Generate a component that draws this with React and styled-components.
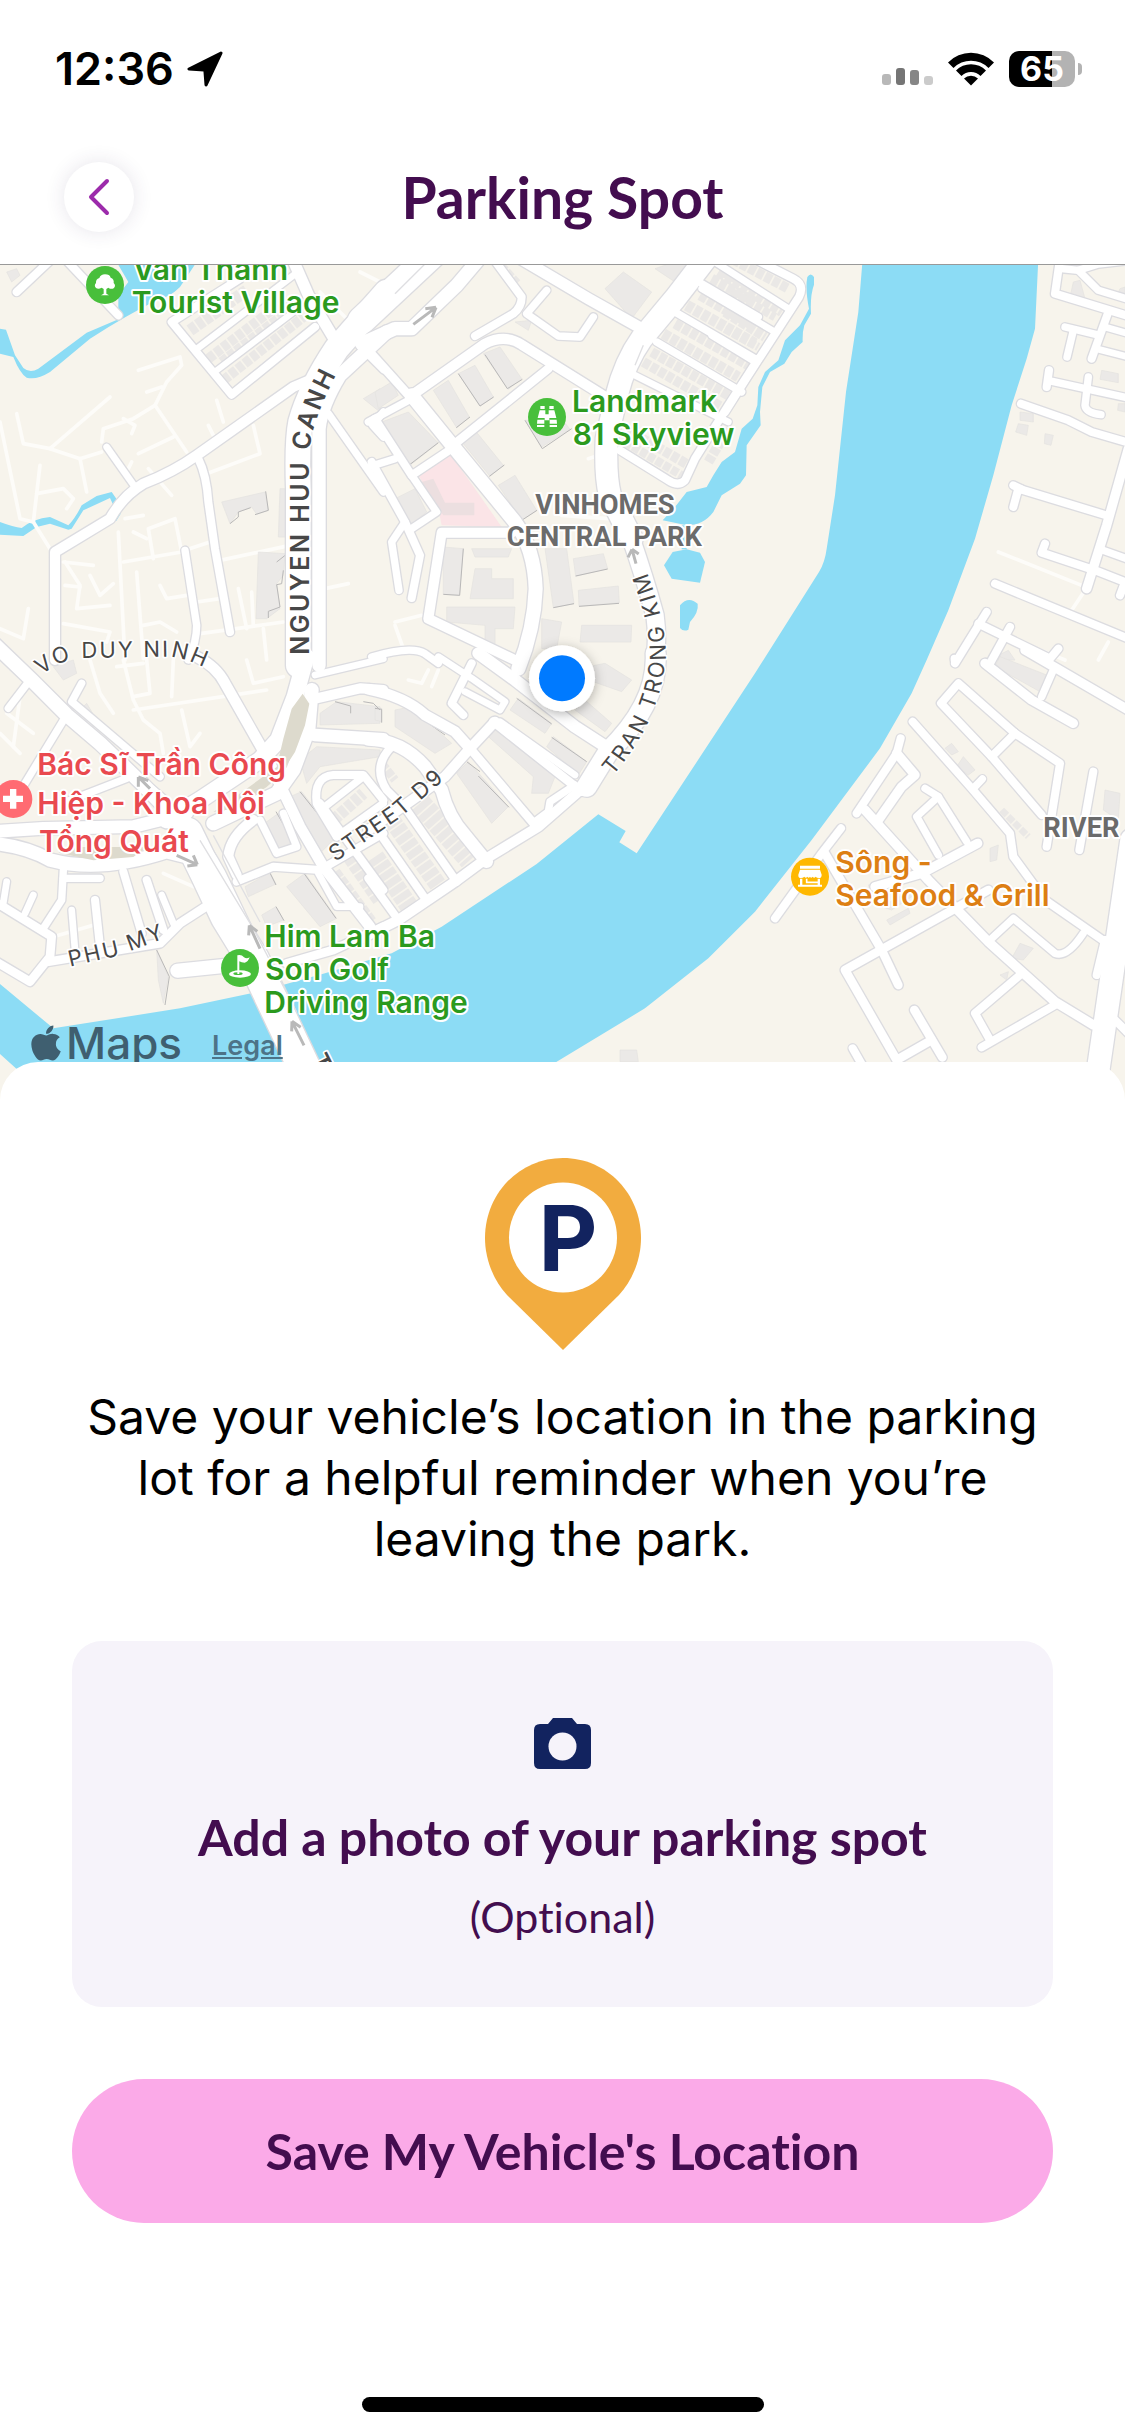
import React, { useState } from 'react';
import styled, { createGlobalStyle } from 'styled-components';
import { FaApple } from 'react-icons/fa';

const GlobalStyle = createGlobalStyle`
  * {
    box-sizing: border-box;
  }

  body {
    margin: 0;
    background: #fff;
    font-family: Inter, 'Liberation Sans', sans-serif;
  }
`;

const Screen = styled.div`
  display: flex;
  flex-direction: column;
  min-height: 100vh;
  background: #fff;
`;

// ---------- status bar ----------

const StatusBar = styled.div`
  display: flex;
  align-items: center;
  justify-content: space-between;
  height: 138px;
  padding: 0 43px 0 55px;
`;

const StatusGroup = styled.div`
  display: flex;
  align-items: center;
  gap: ${({ $gap }) => $gap}px;
`;

const Clock = styled.span`
  font-size: 45px;
  font-weight: 600;
  line-height: 54px;
`;

const SignalBars = styled.div`
  display: flex;
  align-items: flex-end;
  gap: 5px;
  height: 32px;
`;

const Bar = styled.span`
  width: 9px;
  height: ${({ $height }) => $height}px;
  border-radius: 3px;
  background: ${({ $color }) => $color};
`;

const Battery = styled.div`
  display: flex;
  align-items: center;
  gap: 3px;
`;

const BatteryBody = styled.div`
  display: flex;
  align-items: center;
  justify-content: center;
  width: 66px;
  height: 36px;
  border-radius: 10px;
  background: linear-gradient(to right, #000 65%, #b3b3b3 65%);
  color: #fff;
  font-size: 34px;
  font-weight: 700;
  line-height: 36px;
`;

const BatteryCap = styled.span`
  width: 4px;
  height: 12px;
  border-radius: 0 4px 4px 0;
  background: #b3b3b3;
`;

// ---------- nav bar ----------

const NavBar = styled.header`
  display: grid;
  grid-template-columns: 70px 1fr 70px;
  align-items: center;
  height: 127px;
  padding: 0 64px 8px;
  border-bottom: 1px solid #999;
`;

const BackButton = styled.button`
  display: flex;
  align-items: center;
  justify-content: center;
  width: 70px;
  height: 70px;
  padding: 0;
  border: none;
  border-radius: 50%;
  background: #fff;
  box-shadow: 0 0 20px rgba(60, 40, 90, 0.12);
  cursor: pointer;
`;

const Title = styled.h1`
  margin: 0;
  color: #430d4f;
  font-family: Lato, 'Open Sans', sans-serif;
  font-size: 57px;
  font-weight: 700;
  line-height: 64px;
  text-align: center;
`;

// ---------- map ----------

const MapArea = styled.section`
  position: relative;
  height: 835px;
  overflow: hidden;
  background: #f7f4ec;
`;

const MapSvg = styled.svg`
  display: block;
  width: 100%;
  height: 100%;
`;

const Attribution = styled.div`
  position: absolute;
  left: 26px;
  bottom: 30px;
  display: flex;
  align-items: center;
  gap: 30px;
  color: #3f5f70;
`;

const MapsLogo = styled.span`
  display: flex;
  align-items: center;
  font-size: 44px;
  font-weight: 500;
  line-height: 54px;
`;

const LegalLink = styled.a`
  padding-top: 6px;
  color: #4d7387;
  font-size: 27px;
  font-weight: 600;
  line-height: 32px;
`;

const Poi = styled.text`
  fill: ${({ $color }) => $color};
  stroke: #fff;
  stroke-width: 12px;
  stroke-linejoin: round;
  paint-order: stroke;
  font-family: Inter, sans-serif;
  font-size: 90px;
  font-weight: 600;
`;

const District = styled.text`
  fill: #6b6b6b;
  stroke: #fff;
  stroke-width: 12px;
  stroke-linejoin: round;
  paint-order: stroke;
  font-family: Roboto, sans-serif;
  font-size: 82px;
  font-weight: 700;
  text-anchor: ${({ $anchor }) => $anchor || 'middle'};
`;

const Street = styled.text`
  fill: #474747;
  stroke: #fff;
  stroke-width: 10px;
  stroke-linejoin: round;
  paint-order: stroke;
  font-family: Inter, sans-serif;
  font-size: ${({ $bold }) => ($bold ? 75 : 66)}px;
  font-weight: ${({ $bold }) => ($bold ? 600 : 400)};
  letter-spacing: 0.1em;
`;

// Each tile has its own origin, roads are [width, path]
const TILES = [
  {
    x: 0,
    y: 0,
    roads: [
      [28, 'M50 90 L150 -4'],
      [28, 'M200 -4 L355 160'],
      [28, 'M945 195 L695 398 L515 180 L720 50'],
      [24, 'M585 265 L880 40'],
      [22, 'M650 325 L940 105'],
      [38, 'M880 -4 L930 110 L1020 260'],
      [34, 'M165 1194 V870 L330 770 Q370 700 430 665 Q520 630 590 580 L880 375 L950 345'],
      [28, 'M595 590 Q620 640 625 720 L645 860 L690 1110'],
      [24, 'M320 555 L405 675'],
      [26, 'M555 865 L590 1090 Q590 1140 565 1194'],
      [78, 'M1160 90 L1010 260 Q930 380 902 480 Q890 540 895 680 V1210'],
      [44, 'M1160 210 L1020 340 Q965 430 957 500 V1210'],
      [26, 'M985 455 L1150 690'],
      [22, 'M1090 265 L1150 325'],
      [26, 'M1150 450 L1118 490 L1150 525'],
    ],
    paths: [
      'M415 325 L540 285 L545 310 L500 360 L465 430 L400 470 L310 500 L305 540',
      'M50 455 L70 545 L150 560 L330 405',
      'M150 560 L240 590 L305 570',
      'M240 590 L260 690',
      'M0 480 L60 770 L100 780 L150 860',
      'M120 610 L100 780',
      'M110 695 L190 680 L220 710 L200 740',
      'M465 430 L560 570',
      'M370 470 L405 490 L395 515',
      'M440 390 L485 375',
      'M415 575 L520 525',
      'M445 620 L515 700',
      'M385 620 L395 600',
      'M760 490 L780 575 L620 635',
      'M650 415 L670 480',
      'M625 490 L640 520',
      'M555 865 L630 840',
      'M660 895 L870 850',
      'M460 890 L445 800 L525 770 L545 870 L370 900',
      'M355 810 L375 1194',
      'M375 770 L430 760',
      'M400 810 L440 830',
      'M190 900 L280 910',
      'M195 900 L240 970 L230 1040 L330 1030',
      'M270 940 L300 1000 L340 965',
      'M195 970 L240 975',
      'M410 930 L430 1190',
      'M480 970 L500 1010 L560 1000',
      'M590 1020 L660 1010',
      'M600 1115 L850 1080',
      'M715 980 L740 1100',
      'M755 990 L760 1090',
      'M790 1100 L800 1194',
      'M975 980 L1045 965',
      'M0 1100 L70 1130 L85 1040',
      'M190 1085 L330 1110 L320 1140',
      'M430 1090 L480 1080 L530 1110',
      'M960 90 L1060 190',
      'M1080 30 L1140 60',
    ],
    buildings: [
      'M665 720 L795 690 L805 745 L770 757 L755 735 L715 750 L690 785Z',
      'M775 870 L855 875 L850 940 L830 965 L840 1040 L800 1070 L768 1070Z',
      'M840 680 H862 V825 H835Z',
      'M1090 410 L1140 380 V450Z',
      'M20 30 L50 20 L60 40 L35 60Z',
    ],
    shadows: ['M690 785 L715 765 V750 L752 737', 'M797 688 L805 745 L765 758', 'M830 900 L858 878', 'M850 925 L845 965 L830 968 L840 1035 L805 1048 V1068'],
    houses: [
      [40, 'M570 205 L740 85'],
      [34, 'M625 290 L860 110'],
      [34, 'M665 300 L880 135'],
      [34, 'M670 355 L910 165'],
      [26, 'M710 380 L920 210'],
      [24, 'M900 60 L950 150'],
    ],
  },
  {
    x: 1125,
    y: 0,
    roads: [
      [86, 'M-40 175 L190 -40'],
      [44, 'M-40 245 L60 200 L110 200 L245 70 L330 -30'],
      [28, 'M355 -10 L440 105 Q440 135 415 155 L300 222'],
      [38, 'M420 -20 L640 110 L800 200'],
      [26, 'M515 85 L455 155 L550 222 L615 225 L655 165'],
      [70, 'M1000 -20 L900 110 L800 230 Q750 300 725 400 L695 530 Q690 640 705 700 L770 830'],
      [56, 'M765 820 Q810 950 840 1060 Q850 1130 838 1220'],
      [30, 'M-20 265 L110 410'],
      [46, 'M110 400 L240 560 L420 780 Q478 860 482 980 Q478 1100 430 1220'],
      [34, 'M110 400 L330 245 Q390 215 440 248 L700 410'],
      [30, 'M240 545 L520 320'],
      [26, 'M-20 480 L110 410'],
      [28, 'M0 470 L110 640 L230 560'],
      [26, 'M-10 612 L60 590'],
      [26, 'M110 640 L185 750 L110 800'],
      [28, 'M-10 600 L90 780 L135 880 L110 1008'],
      [26, 'M90 780 L50 840 L72 985'],
      [34, 'M410 812 H200 L160 1070 L440 1204'],
      [26, 'M980 65 L1150 165'],
      [26, 'M900 150 L1140 290'],
      [26, 'M845 240 L1100 390'],
      [24, 'M780 340 L1060 480'],
      [28, 'M1150 290 L1060 430 L960 590 L930 655 Q910 675 880 655 L735 565'],
      [26, 'M-10 1185 Q110 1150 150 1175 L190 1204'],
    ],
    paths: ['M60 1080 L140 1060', 'M60 1090 L85 1160', 'M640 590 L730 560', 'M560 760 L700 770'],
    buildings: [
      'M325 275 L375 255 L440 350 L400 382Z',
      'M250 335 L300 310 L355 405 L315 433Z',
      'M175 385 L220 355 L283 465 L245 497Z',
      'M20 480 L100 450 L190 543 L105 610Z',
      'M265 545 L300 505 L385 610 L345 643Z',
      'M370 670 L420 640 L485 745 L440 775Z',
      'M205 855 L265 860 L253 1000 L205 997Z',
      'M300 920 H350 V950 H415 V1010 H285Z',
      'M215 1035 H420 L415 1100 H360 V1165 H330 V1090 L215 1080Z',
      'M595 890 L685 875 L698 920 L602 943Z',
      'M610 985 L730 972 L733 1022 L612 1033Z',
      'M510 860 H575 L597 1025 L535 1037Z',
      'M620 1090 H770 L768 1140 H615Z',
      'M690 80 L745 30 L830 90 L770 170Z',
      'M60 710 L120 680 L155 750 L105 790Z',
      'M290 860 H410 L400 885 H300Z',
      'M420 180 L470 175 L460 205Z',
      'M500 1070 L560 1080 L545 1160 H500Z',
      'M0 390 L50 360 L70 400 L10 440Z',
      'M450 475 L500 555 L585 502 L560 470Z',
      'M840 20 L880 6 H940 L900 60Z',
    ],
    shadows: [
      'M397 380 L442 352',
      'M315 432 L356 405',
      'M244 497 L285 465',
      'M104 608 L190 542',
      'M343 643 L388 609',
      'M440 775 L486 745',
      'M265 860 L254 1000 L205 997',
      'M602 942 L698 921',
      'M612 1033 L732 1024',
      'M450 475 L502 560 L590 500',
      'M535 1037 L597 1025',
      'M250 335 L315 432',
      'M330 278 L397 380',
    ],
    houses: [
      [34, 'M1010 50 L1140 120'],
      [30, 'M1040 30 L1140 80'],
      [38, 'M935 130 L1140 245'],
      [34, 'M975 100 L1140 195'],
      [36, 'M865 215 L1090 345'],
      [34, 'M900 185 L1120 310'],
      [34, 'M805 300 L1040 435'],
      [34, 'M830 270 L1060 400'],
      [34, 'M750 500 L960 620'],
      [30, 'M750 540 L920 640'],
      [34, 'M1000 600 L1060 500'],
      [20, 'M380 6 L430 60'],
    ],
  },
  {
    x: 2235,
    y: 0,
    roads: [
      [28, 'M-110 -80 L145 50 Q180 68 162 105 L0 355 L-60 450'],
      [24, 'M-90 0 L130 140'],
      [24, 'M-130 80 L90 210'],
      [24, 'M-100 220 L30 300'],
      [28, 'M945 -10 L930 95 L1150 162'],
      [26, 'M950 20 L1000 25 L1060 85 L1150 112'],
      [26, 'M1000 25 L1060 6 L1150 -4'],
      [28, 'M1090 150 L1040 290'],
      [26, 'M960 195 L1055 218'],
      [26, 'M985 205 L966 285'],
      [24, 'M1080 195 L1150 215'],
      [24, 'M1060 262 L1150 285'],
      [28, 'M912 325 L905 375'],
      [26, 'M908 355 L1150 408'],
      [26, 'M1030 345 L1020 430 Q1022 452 1068 458'],
      [28, 'M828 425 L970 475 L1040 510 L1150 542'],
      [32, 'M1150 560 L1085 790 L1025 980'],
      [28, 'M805 735 L820 680 L1090 762'],
      [28, 'M805 670 L830 682'],
      [28, 'M900 845 L890 872 L1050 925 L1140 960 L1125 1000'],
      [26, 'M1075 865 L1150 892'],
      [28, 'M750 965 L1150 1130'],
      [28, 'M725 1050 L630 1204'],
      [28, 'M700 1085 L915 1190 L940 1160'],
      [28, 'M795 1095 L735 1204'],
    ],
    paths: ['M760 870 L1010 970', 'M1030 970 L980 1045', 'M1090 1140 L1060 1194', 'M800 1130 L960 1194'],
    buildings: [
      'M985 60 L1005 55 L1020 110 L975 105Z',
      'M825 450 L865 455 V480 L825 475Z',
      'M820 485 L850 490 L845 520 L812 510Z',
      'M900 515 L925 520 L918 550 L898 545Z',
      'M1070 325 L1120 335 V362 L1065 352Z',
      'M1120 425 H1140 V450 L1118 445Z',
      'M1125 80 L1140 75 V100 L1118 95Z',
      'M760 1180 L790 1165 L810 1194 H750Z',
    ],
    shadows: [],
    houses: [
      [34, 'M-60 -20 L130 80'],
      [34, 'M-80 30 L110 150'],
      [30, 'M-40 90 L90 165'],
      [34, 'M-60 150 L60 225'],
      [30, 'M-60 200 L40 255'],
    ],
  },
  {
    x: 0,
    y: 1194,
    roads: [
      [46, 'M-30 -60 L95 60 L200 165 L300 250 L430 375 L600 550'],
      [26, 'M90 60 L25 145'],
      [26, 'M245 70 L215 125 L480 350'],
      [26, 'M200 165 L75 370'],
      [26, 'M200 425 L380 355'],
      [36, 'M590 -10 Q650 20 675 70 L800 290 L900 500 L970 620 L1110 800'],
      [54, 'M918 -10 L885 110 L835 240 L780 300 L600 420 L500 480'],
      [46, 'M935 90 L925 210 L880 330 L830 400 L640 490'],
      [42, 'M-20 515 L130 505 L400 500 L560 460'],
      [44, 'M-20 550 Q80 560 150 600 Q300 640 500 575 L600 600'],
      [100, 'M560 520 Q620 640 680 770 L760 900 L930 1260'],
      [36, 'M440 380 Q580 490 660 640 L780 890'],
      [26, 'M190 630 L185 720 L130 805'],
      [26, 'M190 655 L300 655'],
      [30, 'M-20 722 L155 830 L150 890 L90 965 L-20 900'],
      [24, 'M100 705 L75 760'],
      [24, 'M20 665 L8 740'],
      [30, 'M145 905 L480 850 L540 790 L625 735'],
      [28, 'M370 635 L425 820'],
      [28, 'M440 660 L490 810'],
      [24, 'M485 705 L520 790'],
      [28, 'M285 720 L300 860'],
      [24, 'M215 750 L225 870'],
      [46, 'M532 932 L700 915'],
      [24, 'M945 45 L1150 -4'],
      [34, 'M950 115 L1080 85 L1150 90'],
      [42, 'M945 225 L1150 238'],
      [28, 'M710 665 L820 620 L960 630 L1150 520'],
      [34, 'M760 480 Q690 530 685 590 L710 645'],
      [26, 'M780 480 L830 580 L890 560 L850 460'],
      [24, 'M955 640 L1010 740 L1080 740'],
      [28, 'M1010 530 L950 430 Q940 350 1000 345 L1090 345 L1150 420'],
      [26, 'M975 440 L1090 350'],
      [26, 'M1010 530 L1150 430'],
      [28, 'M960 430 L1150 690'],
      [30, 'M860 910 L1000 870 L1150 800'],
    ],
    paths: [
      'M270 0 L300 100 L340 160',
      'M370 0 L400 120 L430 180 L480 220 L490 280',
      'M400 150 L800 90',
      'M545 150 L570 260 L600 220',
      'M520 0 L515 110',
      'M740 0 L760 70 L850 50',
      'M440 0 L450 100 L400 110',
      'M0 220 L60 280',
      'M20 160 L100 220',
      'M60 110 L40 260',
      'M160 830 L300 790',
      'M490 640 L580 680',
      'M350 20 L430 10',
    ],
    buildings: [
      'M780 500 L835 460 L880 545 L825 575Z',
      'M870 410 L905 395 L1010 530 L960 580Z',
      'M860 680 L915 640 L1010 775 L960 800Z',
      'M735 680 L810 638 L828 672 L745 710Z',
      'M785 765 L828 740 L850 780 L800 800Z',
      'M960 160 L1010 125 L1140 140 V190 L960 195Z',
      'M470 870 L505 950 L490 1030 L475 960Z',
      'M900 300 L950 260 L1140 270 V290 L960 320 L920 370Z',
      'M260 130 L290 180 L280 200 L240 150Z',
      'M160 20 L220 0 L230 40 L190 60Z',
    ],
    shadows: [
      'M900 395 L1008 530',
      'M828 455 L880 545',
      'M912 640 L1008 775',
      'M808 635 L828 675',
      'M828 740 L852 782',
      'M1005 125 L1052 138 V160',
      'M470 870 L508 950 L495 1035',
      'M1090 125 L1120 130 L1140 150',
      'M795 365 L815 350',
    ],
    houses: [
      [50, 'M1000 640 L1110 790'],
      [50, 'M1050 590 L1140 720'],
      [40, 'M1000 480 L1090 400'],
    ],
  },
  {
    x: 1125,
    y: 1194,
    roads: [
      [36, 'M-20 88 Q90 110 150 165 L240 215 L285 265'],
      [42, 'M-20 238 Q80 240 150 320 L200 390 Q220 470 270 525 L335 605'],
      [34, 'M-20 510 L90 435 L210 350 L285 265 L360 185'],
      [30, 'M285 265 L480 495'],
      [30, 'M355 185 L620 395'],
      [24, 'M375 185 L600 345'],
      [34, 'M-40 835 L70 780 L240 665 L335 595 L490 500 L605 400'],
      [28, 'M50 260 Q-10 320 35 390 L95 450 L245 665'],
      [28, 'M0 500 L150 715'],
      [28, 'M-20 655 L70 780'],
      [40, 'M310 -20 L420 60 L600 200 L700 265'],
      [64, 'M635 380 L700 275 Q850 130 842 -20'],
      [24, 'M190 -10 L290 55 L390 125 L375 150 L270 95'],
      [28, 'M290 10 L230 130 L265 165'],
      [26, 'M480 485 L520 455 L525 425 L600 375'],
    ],
    paths: ['M100 60 L140 70 L160 30', 'M170 80 L190 30'],
    buildings: [
      'M405 150 L430 115 L530 190 L510 220Z',
      'M515 260 L535 230 L635 305 L610 345Z',
      'M340 230 L360 210 L540 350 L520 400 L470 400 L475 350Z',
      'M245 340 L280 305 L400 440 L350 490Z',
      'M60 200 L60 150 L110 140 L230 250 L180 280Z',
      'M600 150 L630 120 L710 190 L690 215Z',
      'M0 140 L20 145 V185 L0 180Z',
      'M410 0 H440 L430 50 L410 40Z',
      'M640 20 L690 10 L770 60 L740 95 L640 60Z',
      'M735 1170 H785 L790 1205 H735Z',
    ],
    shadows: ['M425 115 L530 192', 'M530 232 L635 305', 'M275 305 L315 335', 'M310 348 L402 442', 'M105 150 L210 225', 'M0 145 L20 148 V188'],
    houses: [
      [70, 'M135 430 L285 600'],
      [56, 'M50 480 L200 690'],
      [60, 'M0 590 L110 750'],
      [30, 'M20 310 L60 360'],
    ],
  },
  {
    x: 2235,
    y: 1194,
    roads: [
      [28, 'M503 185 L680 385 L795 520 L805 590 L900 720 L1080 845'],
      [26, 'M712 357 L685 385'],
      [28, 'M905 560 L945 310 L810 220 L640 70 L588 130 L740 290 L890 465'],
      [28, 'M740 290 L810 220'],
      [28, 'M1045 335 L1003 570'],
      [28, 'M467 235 L455 280 L335 460'],
      [32, 'M455 280 L510 345 L470 380 L400 480'],
      [32, 'M360 450 L550 660 L730 845 L930 1025 L1045 1095'],
      [26, 'M540 385 L580 410 L665 545'],
      [26, 'M580 410 L515 470 L580 585'],
      [32, 'M698 550 L530 640 L390 680'],
      [28, 'M288 505 L230 580 L90 775'],
      [30, 'M240 580 L410 870 L460 975'],
      [30, 'M730 690 L300 930 L455 1200 L560 1140'],
      [30, 'M508 1050 L592 1192'],
      [28, 'M323 1165 L360 1230'],
      [26, 'M730 845 L805 775 L930 880 Q965 895 1015 820'],
      [28, 'M825 945 L690 1060 L735 1140'],
      [28, 'M710 1162 L930 1035'],
      [72, 'M1160 540 L1055 1260'],
      [28, 'M1080 840 L1055 945'],
      [28, 'M1110 1080 L1160 1130'],
      [32, 'M720 10 L860 120 L985 190'],
      [32, 'M840 -30 L1150 150'],
      [26, 'M890 110 L925 30'],
      [26, 'M628 0 V-5'],
    ],
    paths: [],
    buildings: [
      'M750 20 L765 -10 L905 45 L885 95Z',
      'M635 320 L655 290 L690 330 L670 345Z',
      'M600 265 L620 250 L640 275 L620 285Z',
      'M1080 390 L1125 400 L1120 480 L1075 450Z',
      'M425 780 L490 745 L495 760 L435 795Z',
      'M410 740 L500 690 L515 700 L440 750Z',
      'M800 895 L825 850 L865 865 L835 900Z',
      'M735 565 L760 555 L755 600 L735 605Z',
      'M765 945 L790 935 L785 960Z',
    ],
    shadows: ['M585 600 L650 560'],
    houses: [
      [24, 'M770 450 L850 530'],
      [16, 'M370 680 L500 650'],
    ],
  },
];

const WATER = [
  // Saigon river
  'M2588 -10 L2575 150 L2538 390 L2505 700 L2480 860 Q2475 900 2457 930 L2265 1234 L1910 1774 L1858 1741 L1877 1707 L1795 1657 L1610 1806 L1325 1994 L1175 2074 L975 2134 L775 2189 L540 2239 L160 2299 L0 2166 V2376 L60 2430 V2520 H1500 L1670 2399 L1935 2239 L2125 2089 L2265 1949 L2435 1734 L2640 1459 L2735 1294 L2780 1194 L2845 1045 L2925 830 L2980 640 L3035 430 L3080 290 L3105 200 L3115 -10Z',
  // canals on the west side
  'M350 0 H590 L540 75 Q510 105 470 115 Q380 160 270 230 L150 330 Q110 355 80 347 Q60 335 40 285 L0 275 V200 L18 203 L45 280 L70 318 Q90 335 115 320 L260 212 L355 172 L355 100 L385 60Z',
  'M0 780 Q40 795 65 798 Q100 770 150 765 L205 790 Q225 770 245 730 L290 702 L335 690 L350 712 L362 755 L348 778 L340 770 L345 740 L330 708 L250 745 L215 800 L205 803 L150 785 L110 795 L70 822 L0 818Z',
  // park stream and ponds
  'M2422 45 Q2432 30 2442 45 L2442 68 Q2430 100 2433 155 L2413 190 Q2407 210 2408 240 L2375 270 L2353 305 L2310 330 L2287 375 L2280 450 L2282 490 L2240 550 L2238 640 L2220 665 L2165 700 L2140 750 Q2110 790 2060 790 L1988 775 L2025 735 L2060 690 L2120 675 L2140 640 L2165 600 L2205 570 L2225 500 L2258 470 L2272 430 L2275 375 L2295 330 L2335 295 L2355 235 L2400 190 L2427 140 Q2415 80 2422 45Z',
  'M2018 870 L2060 862 L2100 872 L2115 900 L2100 962 L2015 950 L1992 910Z',
  'M2040 1030 Q2065 1000 2093 1025 Q2097 1050 2070 1080 L2065 1103 Q2050 1110 2040 1098Z',
  'M2045 790 H2060 V862 H2045Z',
];

const ARROWS = [
  'M1240 187 L1308 136 M1308 136 L1276 140 M1308 136 L1296 166',
  'M450 1580 L415 1545 M415 1545 L445 1556 M415 1545 V1574',
  'M530 1780 L592 1808 M592 1808 L580 1780 M592 1808 L562 1812',
  'M780 2060 L748 1990 M748 1990 L746 2020 M748 1990 L772 2008',
  'M912 2350 L876 2278 M876 2278 L875 2308 M876 2278 L902 2296',
  'M1908 905 L1896 862 M1896 862 L1884 886 M1896 862 L1916 876',
];

const Tiles = ({ children }) =>
  TILES.map((tile) => (
    <g key={`${tile.x}-${tile.y}`} transform={`translate(${tile.x} ${tile.y})`}>
      {children(tile)}
    </g>
  ));

const ParkingMap = () => (
  <MapSvg viewBox="0 9 3375 2505" preserveAspectRatio="xMidYMid slice" role="img" aria-label="Map around Vinhomes Central Park">
    <defs>
      <filter id="dotShadow" x="-50%" y="-50%" width="200%" height="200%">
        <feDropShadow dx="0" dy="8" stdDeviation="18" floodColor="#000" floodOpacity="0.3" />
      </filter>
      <path id="nguyenHuuCanh" d="M928 1178 V580 Q930 490 1010 335 L1060 240" />
      <path id="voDuyNinh" d="M125 1240 Q180 1192 250 1188 L500 1184 Q560 1186 640 1230" />
      <path id="phuMy" d="M210 2114 L350 2082 L540 2012" />
      <path id="streetD9" d="M1006 1800 L1200 1668 L1400 1495" />
      <path id="tranTrongKim" d="M1838 1542 Q1985 1370 1997 1180 Q1998 1050 1900 835" />
      <path id="bridge" d="M930 2390 L1000 2530" />
    </defs>
    <rect x="0" y="0" width="3375" height="2520" fill="#f7f4ec" />

    {WATER.map((d) => (
      <path key={d} d={d} fill="#8cdcf5" />
    ))}

    <g fill="none" stroke="#fdfcf9" strokeWidth="11" strokeLinejoin="round" strokeLinecap="round">
      <Tiles>{(tile) => tile.paths.map((d) => <path key={d} d={d} />)}</Tiles>
    </g>

    <path d="M1255 640 L1350 575 L1425 680 L1505 795 L1325 790 L1315 740Z" fill="#fbe4e7" />
    <path d="M1265 660 L1300 650 L1335 722 H1423 V760 H1330Z" fill="#ecdfe0" />

    <g fill="#ebe9e7" stroke="#e4e2e0" strokeWidth="2">
      <Tiles>{(tile) => tile.buildings.map((d) => <path key={d} d={d} />)}</Tiles>
    </g>
    <g fill="none" stroke="#eae8e6" strokeDasharray="22 5">
      <Tiles>{(tile) => tile.houses.map(([w, d]) => <path key={d} d={d} strokeWidth={w - 4} />)}</Tiles>
    </g>
    <g fill="none" stroke="#b9b8b8" strokeWidth="3">
      <Tiles>{(tile) => tile.shadows.map((d) => <path key={d} d={d} />)}</Tiles>
    </g>

    {/* road casings first, so that the white fills join up */}
    <g fill="none" stroke="#dcdce0" strokeLinejoin="round" strokeLinecap="round">
      <Tiles>{(tile) => tile.roads.map(([w, d]) => <path key={d} d={d} strokeWidth={w + 4} />)}</Tiles>
    </g>
    <g fill="none" stroke="#fff" strokeLinejoin="round" strokeLinecap="round">
      <Tiles>{(tile) => tile.roads.map(([w, d]) => <path key={d} d={d} strokeWidth={w - 4} />)}</Tiles>
    </g>

    {/* medians */}
    <path d="M908 1295 L928 1325 L915 1390 L885 1470 L840 1540 L800 1575 L700 1640 L640 1650 L740 1580 L830 1515 L850 1430 L875 1340Z" fill="#dddacd" />
    <path d="M175 1772 L230 1755 L440 1755 L400 1785 L280 1795Z" fill="#dddacd" />
    <g fill="none" stroke="#dfdfe2" strokeWidth="4">
      <path d="M1185 95 L1285 -4" />
      <path d="M600 1735 L760 2000 L890 2250" />
      <path d="M640 1720 L780 1980" />
      <path d="M1905 310 L1930 250" />
    </g>

    <g fill="none" stroke="#b9b9b9" strokeWidth="9">
      {ARROWS.map((d) => (
        <path key={d} d={d} />
      ))}
    </g>

    <Street $bold>
      <textPath href="#nguyenHuuCanh">NGUYEN HUU CANH</textPath>
    </Street>
    <Street>
      <textPath href="#voDuyNinh">VO DUY NINH</textPath>
    </Street>
    <Street>
      <textPath href="#phuMy">PHU MY</textPath>
    </Street>
    <Street>
      <textPath href="#streetD9">STREET D9</textPath>
    </Street>
    <Street>
      <textPath href="#tranTrongKim">TRAN TRONG KIM</textPath>
    </Street>
    <Street $bold>
      <textPath href="#bridge">T</textPath>
    </Street>

    <District>
      <tspan x="1815" y="757">VINHOMES</tspan>
      <tspan x="1813" y="852">CENTRAL PARK</tspan>
    </District>
    <District x="3130" y="1724" $anchor="start">RIVER</District>

    <Poi $color="#2b9a1e">
      <tspan x="398" y="54">Van Thanh</tspan>
      <tspan x="395" y="152">Tourist Village</tspan>
    </Poi>
    <Poi $color="#2b9a1e">
      <tspan x="1716" y="449">Landmark</tspan>
      <tspan x="1718" y="548">81 Skyview</tspan>
    </Poi>
    <Poi $color="#2b9a1e">
      <tspan x="793" y="2056">Him Lam Ba</tspan>
      <tspan x="795" y="2154">Son Golf</tspan>
      <tspan x="793" y="2254">Driving Range</tspan>
    </Poi>
    <Poi $color="#e9494f">
      <tspan x="112" y="1540">Bác Sĩ Trần Công</tspan>
      <tspan x="112" y="1655">Hiệp - Khoa Nội</tspan>
      <tspan x="117" y="1769">Tổng Quát</tspan>
    </Poi>
    <Poi $color="#dd7f14">
      <tspan x="2506" y="1833">Sông -</tspan>
      <tspan x="2506" y="1932">Seafood &amp; Grill</tspan>
    </Poi>

    {/* tree */}
    <g transform="translate(315 69)">
      <circle r="57" fill="#48bf3b" />
      <path d="M0 -32 Q14 -32 17 -22 Q28 -18 26 -6 Q34 2 26 10 Q18 14 10 8 L4 12 V26 L12 31 H-12 L-4 26 V12 L-10 8 Q-20 14 -27 9 Q-34 2 -27 -6 Q-28 -18 -17 -21 Q-13 -32 0 -32Z" fill="#fff" />
    </g>
    {/* binoculars */}
    <g transform="translate(1641 465)">
      <circle r="57" fill="#48bf3b" />
      <path d="M-20 -33 H-7 V-24 H-20Z M7 -33 H20 V-24 H7Z M-22 -20 H-5 V-8 H5 V-20 H22 L28 3 H7 V10 H-7 V3 H-28Z M-29 8 H-8 V20 H-30Z M8 8 H29 L30 20 H8Z M-30 24 H-8 V30 H-30Z M8 24 H30 V30 H8Z" fill="#fff" />
    </g>
    {/* golf flag */}
    <g transform="translate(720 2118)">
      <circle r="57" fill="#48bf3b" />
      <ellipse cx="0" cy="18" rx="33" ry="11" fill="#fff" />
      <ellipse cx="-6" cy="17" rx="14" ry="4" fill="#48bf3b" />
      <path d="M-8 -38 Q4 -42 12 -32 Q20 -26 29 -32 Q24 -18 14 -16 Q4 -16 -2 -20 V18 H-8Z" fill="#fff" />
    </g>
    {/* clinic */}
    <g transform="translate(40 1611)">
      <circle r="57" fill="#ff6b72" />
      <path d="M-10 -30 H9 V-10 H29 V9 H9 V29 H-10 V9 H-31 V-10 H-10Z" fill="#fff" />
    </g>
    {/* restaurant */}
    <g transform="translate(2430 1844)">
      <circle r="57" fill="#ffb800" />
      <path d="M-30 -33 H30 V-24 H-30Z M-30 -21 H30 L35 -6 Q35 4 27 4 Q20 4 17 0 Q12 6 8 0 Q3 6 0 0 Q-4 6 -8 0 Q-13 6 -17 0 Q-21 4 -27 4 Q-36 4 -35 -6Z M-30 6 H-23 V24 H30 V6 H23 V24 H36 V30 H-36 V24 H-30Z" fill="#fff" />
      <path d="M-10 6 V17 H27" fill="none" stroke="#fff" strokeWidth="5" />
    </g>

    {/* current position */}
    <g transform="translate(1686 1249)">
      <circle r="99" fill="#fff" filter="url(#dotShadow)" />
      <circle r="69" fill="#007aff" />
    </g>
  </MapSvg>
);

// ---------- bottom sheet ----------

const Sheet = styled.main`
  position: relative;
  display: flex;
  flex: 1;
  flex-direction: column;
  align-items: center;
  margin-top: -38px;
  padding: 96px 72px 24px;
  border-radius: 38px 38px 0 0;
  background: #fff;
`;

const Message = styled.p`
  margin: 36px 0 72px;
  color: #000;
  font-size: 48px;
  line-height: 61px;
  text-align: center;
`;

const PhotoButton = styled.button`
  display: flex;
  flex-direction: column;
  align-items: center;
  width: 100%;
  padding: 77px 24px 62px;
  border: none;
  border-radius: 30px;
  background: #f6f3fa;
  color: #430d4f;
  font-family: Lato, 'Open Sans', sans-serif;
  font-variant-ligatures: none;
  cursor: pointer;
`;

const PhotoLabel = styled.span`
  margin-top: 36px;
  font-size: 50px;
  font-weight: 700;
  line-height: 64px;
`;

const PhotoHint = styled.span`
  margin-top: 20px;
  font-size: 43px;
  line-height: 56px;
`;

const SaveButton = styled.button`
  width: 100%;
  height: 144px;
  margin-top: 72px;
  border: none;
  border-radius: 72px;
  background: #fbaae8;
  color: #430d4f;
  font-family: Lato, 'Open Sans', sans-serif;
  font-size: 50px;
  font-weight: 700;
  font-variant-ligatures: none;
  cursor: pointer;
`;

const HomeIndicator = styled.div`
  width: 402px;
  height: 15px;
  margin-top: auto;
  border-radius: 8px;
  background: #000;
`;

const PinLetter = styled.text`
  fill: #12235f;
  font-family: Inter, sans-serif;
  font-size: 91px;
  font-weight: 700;
  text-anchor: middle;
`;

const App = () => {
  const [saved, setSaved] = useState(false);

  return (
    <>
      <GlobalStyle />
      <Screen>
        <StatusBar>
          <StatusGroup $gap={13}>
            <Clock>12:36</Clock>
            <svg width="36" height="36" viewBox="0 0 36 36" aria-hidden="true">
              <path d="M34 2 L2 18 L17 19 Q18 19 18 21 L19 34Z" stroke="#000" strokeWidth="3" strokeLinejoin="round" />
            </svg>
          </StatusGroup>
          <StatusGroup $gap={15}>
            <SignalBars>
              <Bar $height={11} $color="#b8b8b8" />
              <Bar $height={17} $color="#757575" />
              <Bar $height={15} $color="#868686" />
              <Bar $height={9} $color="#cbcbcb" />
            </SignalBars>
            <svg width="46" height="34" viewBox="0 0 46 34" aria-hidden="true">
              <path d="M0 10.5 A32 32 0 0 1 46 10.5 L40.500 16 A24.500 24.500 0 0 0 5.500 16Z" />
              <path d="M8 18.500 A21 21 0 0 1 38 18.500 L32.500 24 A13.500 13.500 0 0 0 13.500 24Z" />
              <path d="M16 26.500 A10 10 0 0 1 30 26.500 L23 33.500Z" />
            </svg>
            <Battery>
              <BatteryBody>65</BatteryBody>
              <BatteryCap />
            </Battery>
          </StatusGroup>
        </StatusBar>

        <NavBar>
          <BackButton type="button" aria-label="Back">
            <svg width="22" height="38" viewBox="0 0 22 38" fill="none">
              <path d="M19 3 L3 19 L19 35" stroke="#9c2bab" strokeWidth="4" strokeLinecap="round" strokeLinejoin="round" />
            </svg>
          </BackButton>
          <Title>Parking Spot</Title>
        </NavBar>

        <MapArea>
          <ParkingMap />
          <Attribution>
            <MapsLogo>
              <FaApple size={40} />
              Maps
            </MapsLogo>
            <LegalLink href="#legal">Legal</LegalLink>
          </Attribution>
        </MapArea>

        <Sheet>
          <svg width="156" height="192" viewBox="0 0 156 192" role="img" aria-label="Parking">
            <path d="M78 0 C122 0 156 36 156 80 C156 102 147 123 134 137 L78 192 L22 137 C9 123 0 102 0 80 C0 36 34 0 78 0Z" fill="#f2ac3f" />
            <ellipse cx="78" cy="79.5" rx="54" ry="55" fill="#fff" />
            <PinLetter x="83" y="113">P</PinLetter>
          </svg>

          <Message>Save your vehicle’s location in the parking lot for a helpful reminder when you’re leaving the park.</Message>

          <PhotoButton type="button">
            <svg width="57" height="51" viewBox="0 0 57 51" aria-hidden="true">
              <path d="M19 0 H38 L43 6 H51 Q57 6 57 12 V45 Q57 51 51 51 H6 Q0 51 0 45 V12 Q0 6 6 6 H14Z" fill="#12235f" />
              <circle cx="28.5" cy="28.5" r="14" fill="#f6f3fa" />
            </svg>
            <PhotoLabel>Add a photo of your parking spot</PhotoLabel>
            <PhotoHint>(Optional)</PhotoHint>
          </PhotoButton>

          <SaveButton type="button" aria-pressed={saved} onClick={() => setSaved(!saved)}>
            Save My Vehicle's Location
          </SaveButton>

          <HomeIndicator />
        </Sheet>
      </Screen>
    </>
  );
};

export default App;
